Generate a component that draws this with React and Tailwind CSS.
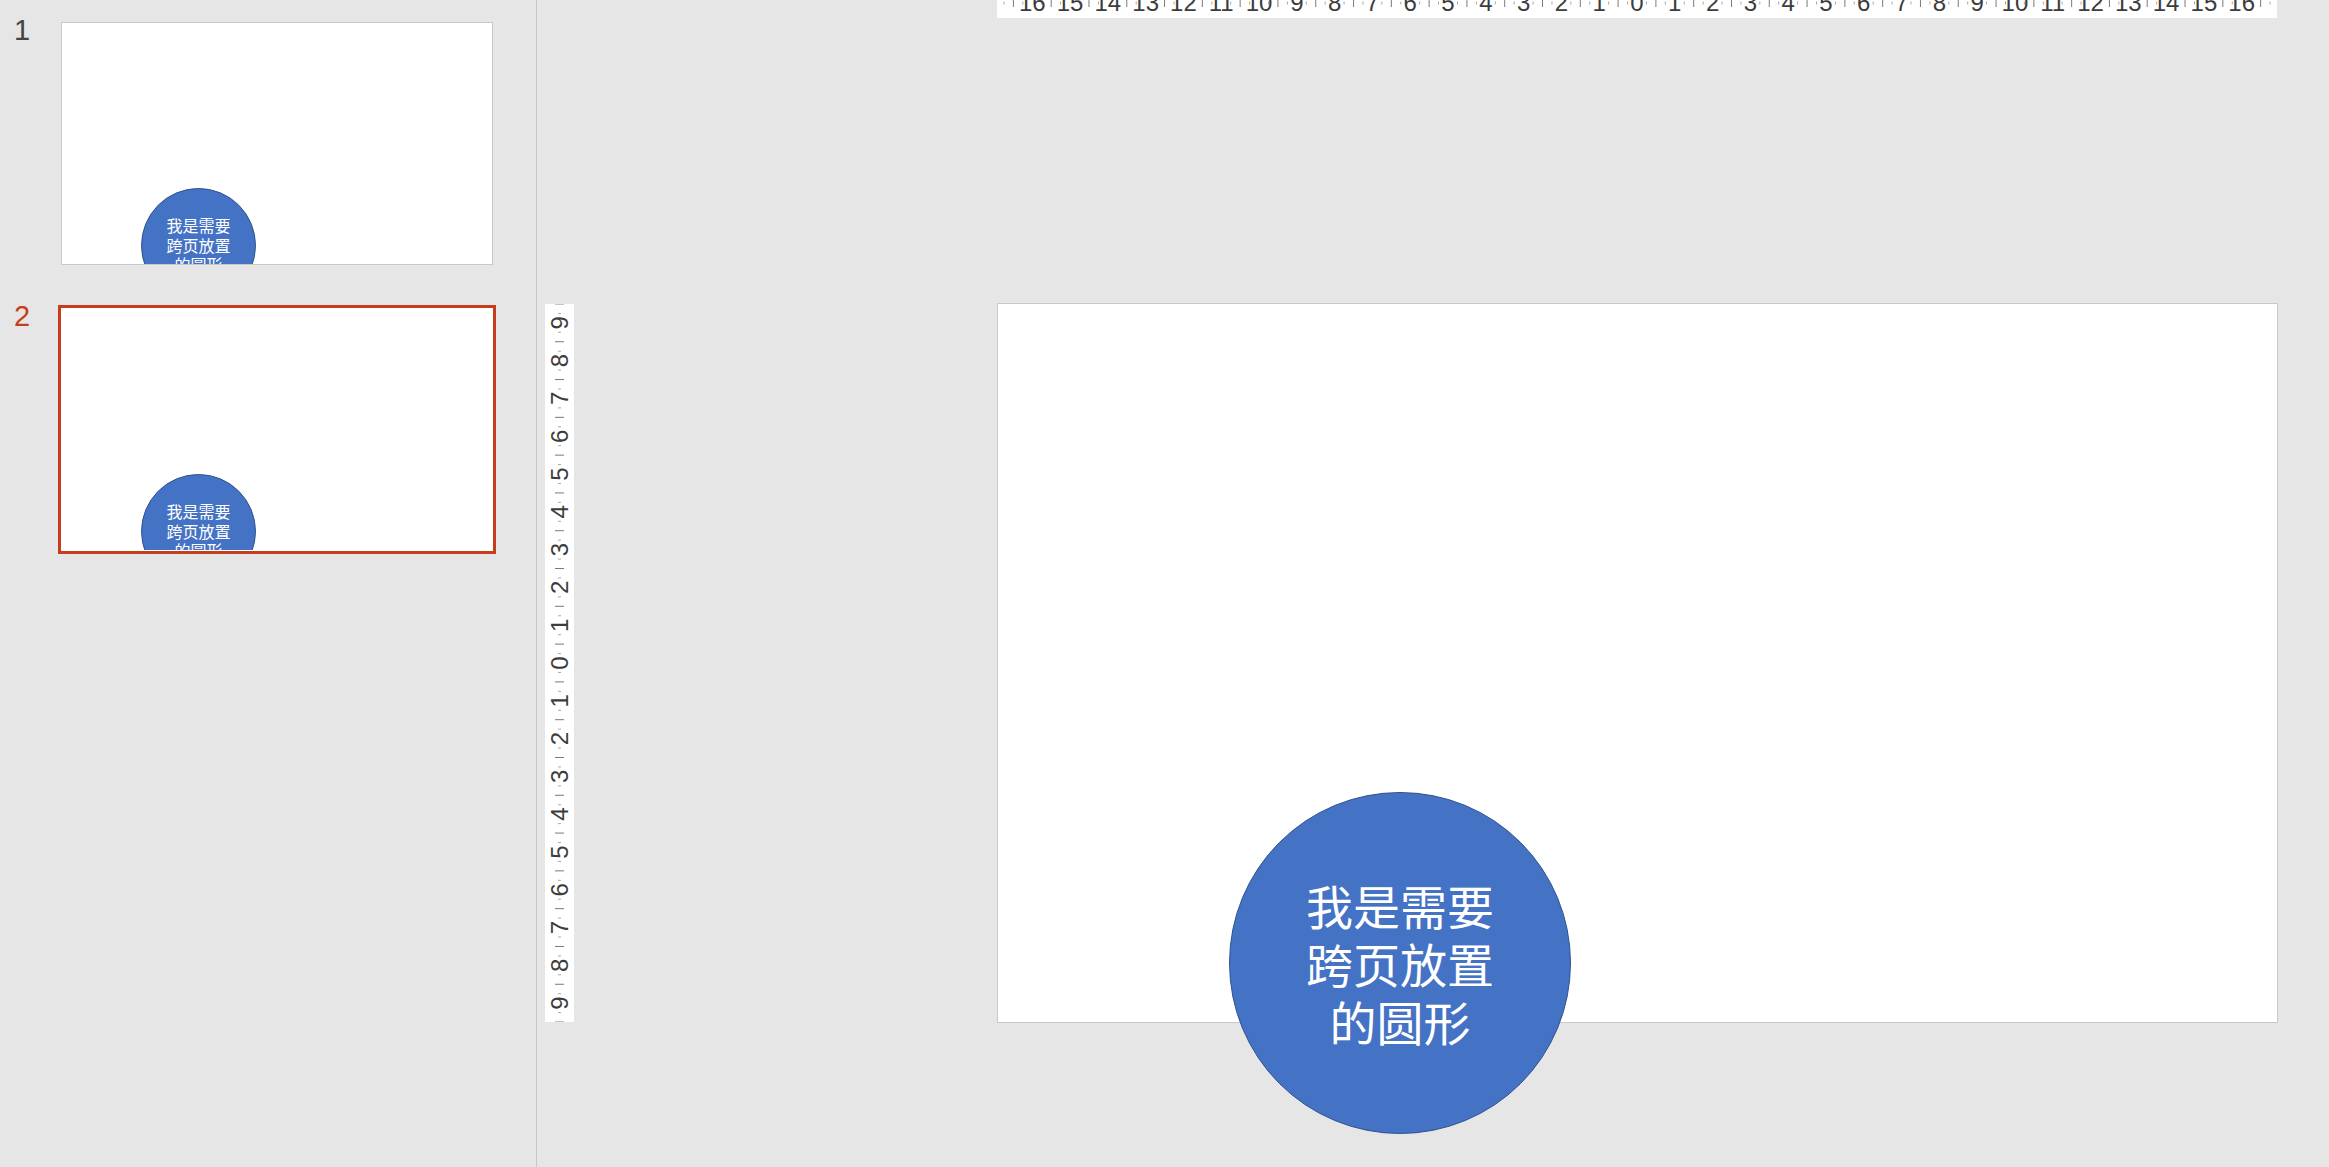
import React from 'react'

const CM = 1280 / 33.867
const circleText = ['我是需要', '跨页放置', '的圆形']

function HRuler() {
  const ticks = []
  for (let q = -67; q <= 67; q++) {
    if (q % 4 === 0) continue
    const x = 640 + (q / 4) * CM
    if (q % 2 === 0) {
      ticks.push(<line key={q} x1={x} x2={x} y1={-2} y2={7} stroke="#7a7a7a" strokeWidth="1" />)
    } else {
      ticks.push(<line key={q} x1={x} x2={x} y1={1.5} y2={4.5} stroke="#a8a8a8" strokeWidth="1" />)
    }
  }
  const labels = []
  for (let k = -16; k <= 16; k++) {
    labels.push(
      <text key={k} x={640 + k * CM} y={11} textAnchor="middle" fontSize="24" fill="#3c3c3c">
        {Math.abs(k)}
      </text>
    )
  }
  return (
    <svg width="1280" height="18" viewBox="0 0 1280 18" className="block font-['Liberation_Sans',sans-serif]">
      {ticks}
      {labels}
    </svg>
  )
}

function VRuler() {
  const mid = 359
  const ticks = []
  for (let q = -38; q <= 38; q++) {
    if (q % 4 === 0) continue
    const y = mid + (q / 4) * CM
    if (q % 2 === 0) {
      ticks.push(<line key={q} x1={10} x2={19} y1={y} y2={y} stroke="#7a7a7a" strokeWidth="1" />)
    } else {
      ticks.push(<line key={q} x1={13} x2={16} y1={y} y2={y} stroke="#a8a8a8" strokeWidth="1" />)
    }
  }
  const labels = []
  for (let k = -9; k <= 9; k++) {
    const y = mid + k * CM
    labels.push(
      <text
        key={k}
        transform={`translate(14.5 ${y}) rotate(-90)`}
        x="0"
        y="8.5"
        textAnchor="middle"
        fontSize="24"
        fill="#3c3c3c"
      >
        {Math.abs(k)}
      </text>
    )
  }
  return (
    <svg width="29" height="718" viewBox="0 0 29 718" className="block font-['Liberation_Sans',sans-serif]">
      {ticks}
      {labels}
    </svg>
  )
}

function Circle({ font, lead, className }) {
  return (
    <div
      className={`absolute flex items-center justify-center rounded-full border border-[#2f528f] bg-[#4472c4] text-center text-white font-['Noto_Sans_CJK_SC',sans-serif] ${className}`}
    >
      <div className={`${font} ${lead}`}>
        {circleText.map((line) => (
          <div key={line}>{line}</div>
        ))}
      </div>
    </div>
  )
}

function Thumb({ active }) {
  return (
    <div
      className={
        active
          ? 'relative h-[243px] w-[432px] overflow-hidden border border-white bg-white outline-[3px] outline-solid outline-[#c43e1c]'
          : 'relative h-[243px] w-[432px] overflow-hidden border border-[#c8c8c8] bg-white'
      }
    >
      <Circle className="left-[79px] top-[165px] h-[115px] w-[115px]" font="text-[16px]" lead="leading-[19.6px]" />
    </div>
  )
}

export default function App() {
  return (
    <div className="flex h-[1167px] w-[2329px] overflow-hidden bg-[#e6e6e6] font-['Liberation_Sans',sans-serif]">
      <aside className="w-[537px] shrink-0 border-r border-[#c8c8c8] pt-[22px]">
        <div className="flex items-start">
          <div className="-mt-[6px] w-[61px] pl-[14px] text-[29px] leading-none text-[#444444]">1</div>
          <Thumb />
        </div>
        <div className="mt-[43px] flex items-start">
          <div className="-mt-[6px] w-[61px] pl-[14px] text-[29px] leading-none text-[#c43e1c]">2</div>
          <Thumb active />
        </div>
      </aside>

      <main className="flex flex-1 flex-col">
        <div className="ml-[460px] h-[18px] w-[1280px] overflow-hidden bg-white">
          <HRuler />
        </div>
        <div className="mt-[285px] flex items-start">
          <div className="ml-[8px] mt-[1px] h-[718px] w-[29px] bg-white">
            <VRuler />
          </div>
          <div className="relative ml-[423px] h-[720px] w-[1281px] border border-[#c8c8c8] bg-white">
            <Circle className="left-[231px] top-[488px] h-[342px] w-[342px]" font="text-[47px]" lead="leading-[58px]" />
          </div>
        </div>
      </main>
    </div>
  )
}
